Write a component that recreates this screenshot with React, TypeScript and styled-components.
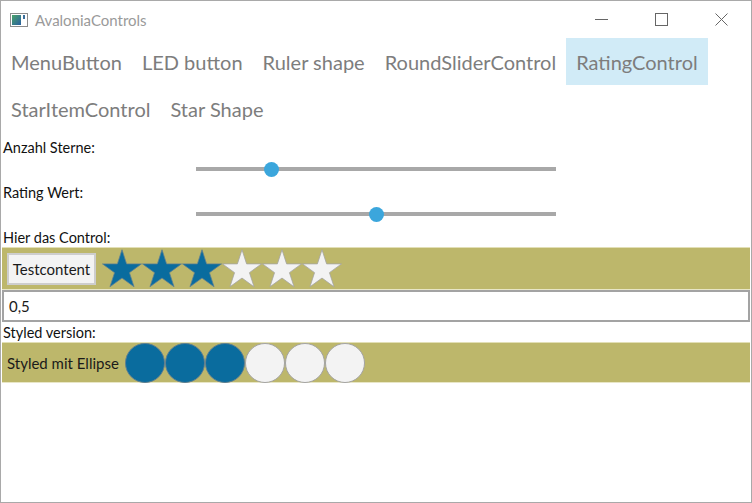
import React from "react";
import styled, { createGlobalStyle } from "styled-components";

const GlobalStyle = createGlobalStyle`
  html, body { margin: 0; padding: 0; background: #ffffff; }
  body { font-family: Lato, "Noto Sans", sans-serif; }
  * { box-sizing: border-box; }
`;

const Window = styled.div`
  width: 752px;
  height: 503px;
  border: 1px solid #a9a9a9;
  background: #ffffff;
  display: flex;
  flex-direction: column;
  overflow: hidden;
`;

const TitleBar = styled.div`
  height: 37px;
  display: flex;
  align-items: center;
  flex-shrink: 0;
`;

const AppIcon = styled.svg`
  margin-left: 9px;
  margin-right: 7px;
  flex-shrink: 0;
`;

const Title = styled.span`
  font-family: Lato, "Noto Sans", sans-serif;
  font-size: 15px;
  color: #9a9a9a;
  flex: 1;
  padding-top: 1px;
`;

const CaptionButton = styled.div`
  width: 60px;
  height: 37px;
  display: flex;
  align-items: center;
  justify-content: center;
`;

const TabStrip = styled.div`
  display: flex;
  flex-wrap: wrap;
  flex-shrink: 0;
`;

const Tab = styled.div<{ $active?: boolean }>`
  height: 47px;
  padding: 0 10px;
  display: flex;
  align-items: center;
  font-family: Lato, "Noto Sans", sans-serif;
  font-size: 20px;
  color: #7d7d7d;
  background: ${(p) => (p.$active ? "#d1ebf7" : "transparent")};
  white-space: nowrap;
`;

const Content = styled.div`
  display: flex;
  flex-direction: column;
  padding: 6px 1px 0 1px;
`;

const FieldLabel = styled.div<{ $gap?: number }>`
  height: 19px;
  line-height: 19px;
  padding-left: 1px;
  margin-top: ${(p) => p.$gap ?? 0}px;
  font-family: Lato, "Noto Sans", sans-serif;
  font-size: 14.5px;
  color: #111111;
`;

const SliderRow = styled.div`
  height: 26px;
  display: flex;
  justify-content: center;
  padding-top: 10px;
`;

const Track = styled.div`
  position: relative;
  width: 360px;
  height: 4px;
  background: #a8a8a8;
`;

const Thumb = styled.div`
  position: absolute;
  top: -5.5px;
  width: 15px;
  height: 15px;
  margin-left: -7.5px;
  border-radius: 50%;
  background: #3ba6dc;
`;

const RatingBar = styled.div<{ $height: number }>`
  height: ${(p) => p.$height}px;
  background: #bdb76b;
  border-top: 1px solid #e2dfb6;
  border-bottom: 1px solid #e8e6c6;
  display: flex;
  align-items: center;
  padding-left: 5px;
`;

const ContentButton = styled.div`
  width: 89px;
  height: 32px;
  margin-right: 6px;
  background: #f3f3f3;
  border: 2px solid #cdcdcd;
  display: flex;
  align-items: center;
  justify-content: center;
  font-family: Lato, "Noto Sans", sans-serif;
  font-size: 15px;
  color: #1a1a1a;
`;

const ContentText = styled.div`
  width: 118px;
  font-family: Lato, "Noto Sans", sans-serif;
  font-size: 15px;
  color: #1a1a1a;
`;

const Items = styled.div`
  display: flex;
  align-items: center;
`;

const TextBox = styled.div`
  height: 32px;
  border: 2px solid #a3a3a3;
  display: flex;
  align-items: center;
  padding-left: 5px;
  font-family: Lato, "Noto Sans", sans-serif;
  font-size: 15px;
  color: #1a1a1a;
  background: #ffffff;
`;

const BLUE = "#0a6c9e";

const STAR =
  "20,0 24.71,14.51 39.97,14.51 27.63,23.48 32.34,37.99 20,29.02 7.66,37.99 12.37,23.48 0.03,14.51 15.29,14.51";

function Star({ filled }: { filled: boolean }) {
  return (
    <svg width={40} height={39} viewBox="-0.5 -0.5 41 39.5">
      <polygon
        points={STAR}
        fill={filled ? BLUE : "#f3f3f3"}
        stroke={filled ? "#5f7f92" : "#a3a3a3"}
        strokeWidth={0.8}
        strokeLinejoin="miter"
      />
    </svg>
  );
}

function Dot({ filled }: { filled: boolean }) {
  return (
    <svg width={40} height={40} viewBox="0 0 40 40">
      <circle
        cx={20}
        cy={20}
        r={19.5}
        fill={filled ? BLUE : "#f3f3f3"}
        stroke={filled ? "#5f7f92" : "#a3a3a3"}
        strokeWidth={1}
      />
    </svg>
  );
}

function Slider({ pos }: { pos: number }) {
  return (
    <SliderRow>
      <Track>
        <Thumb style={{ left: pos }} />
      </Track>
    </SliderRow>
  );
}

const tabs = [
  "MenuButton",
  "LED button",
  "Ruler shape",
  "RoundSliderControl",
  "RatingControl",
  "StarItemControl",
  "Star Shape",
];

export default function App() {
  const value = 3;
  const count = 6;
  const idx = Array.from({ length: count }, (_, i) => i);
  return (
    <>
      <GlobalStyle />
      <Window>
        <TitleBar>
          <AppIcon width={18} height={14} viewBox="0 0 18 14">
            <defs>
              <linearGradient id="ig" x1="0" y1="0" x2="1" y2="1">
                <stop offset="0" stopColor="#4aa36a" />
                <stop offset="1" stopColor="#2a5fa0" />
              </linearGradient>
            </defs>
            <rect x="0.5" y="0.5" width="17" height="13" fill="#ffffff" stroke="#8c8c8c" />
            <rect x="2" y="2" width="9" height="10" fill="url(#ig)" />
            <rect x="13" y="2" width="2" height="4" fill="#3b6e9a" />
          </AppIcon>
          <Title>AvaloniaControls</Title>
          <CaptionButton>
            <svg width={13} height={13} viewBox="0 0 13 13">
              <line x1="0" y1="6.5" x2="13" y2="6.5" stroke="#666" strokeWidth="1" />
            </svg>
          </CaptionButton>
          <CaptionButton>
            <svg width={13} height={13} viewBox="0 0 13 13">
              <rect x="0.5" y="0.5" width="12" height="12" fill="none" stroke="#666" strokeWidth="1" />
            </svg>
          </CaptionButton>
          <CaptionButton>
            <svg width={13} height={13} viewBox="0 0 13 13">
              <path d="M0.5 0.5 L12.5 12.5 M12.5 0.5 L0.5 12.5" stroke="#666" strokeWidth="1" />
            </svg>
          </CaptionButton>
        </TitleBar>
        <TabStrip>
          {tabs.map((t) => (
            <Tab key={t} $active={t === "RatingControl"}>
              {t}
            </Tab>
          ))}
        </TabStrip>
        <Content>
          <FieldLabel>Anzahl Sterne:</FieldLabel>
          <Slider pos={75} />
          <FieldLabel>Rating Wert:</FieldLabel>
          <Slider pos={180} />
          <FieldLabel>Hier das Control:</FieldLabel>
          <RatingBar $height={43}>
            <ContentButton>Testcontent</ContentButton>
            <Items>
              {idx.map((i) => (
                <Star key={i} filled={i < value} />
              ))}
            </Items>
          </RatingBar>
          <TextBox>0,5</TextBox>
          <FieldLabel $gap={1}>Styled version:</FieldLabel>
          <RatingBar $height={41}>
            <ContentText>Styled mit Ellipse</ContentText>
            <Items>
              {idx.map((i) => (
                <Dot key={i} filled={i < value} />
              ))}
            </Items>
          </RatingBar>
        </Content>
      </Window>
    </>
  );
}
